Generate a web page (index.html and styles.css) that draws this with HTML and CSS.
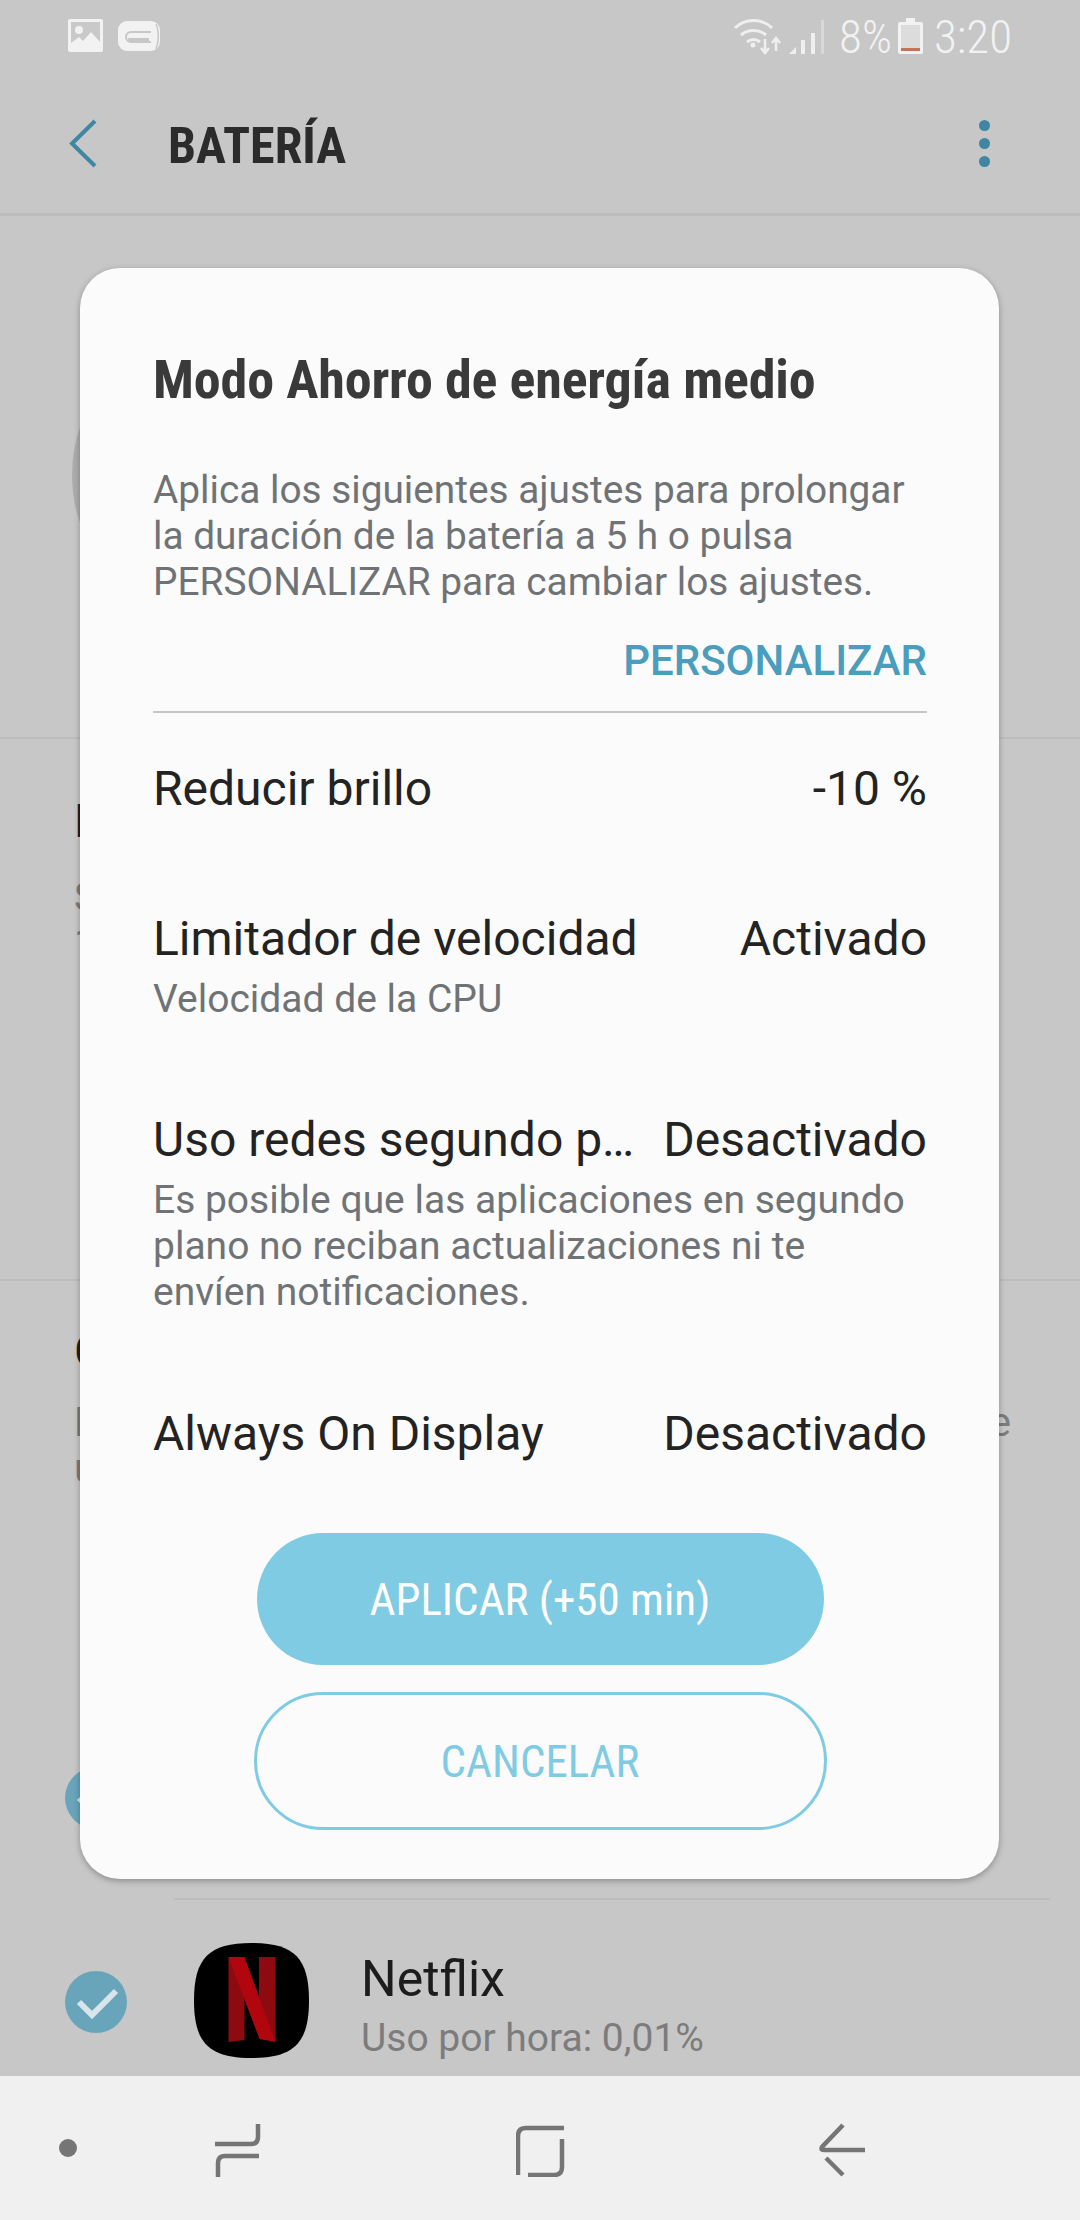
FILE: index.html
```html
<!DOCTYPE html>
<html lang="es">
<head>
<meta charset="utf-8">
<title>Batería</title>
<link rel="stylesheet" href="styles.css">
</head>
<body>
<div class="phone">
  <header class="status">
    <svg class="st-image" width="35" height="33" viewBox="0 0 35 33"><rect width="35" height="33" rx="2" fill="#f2f2f2"/><rect x="3" y="3" width="29" height="27" fill="#c9c9c9"/><circle cx="11" cy="11" r="4" fill="#f2f2f2"/><path d="M3 24l8-6 4 4 8-9 9 10v10H3z" fill="#f2f2f2"/></svg>
    <svg class="st-game" width="42" height="30" viewBox="0 0 42 30"><rect width="42" height="30" rx="9" fill="#f2f2f2"/><path d="M33 11H13a5 5 0 0 0 0 10h20" fill="none" stroke="#c7c7c7" stroke-width="2"/><path d="M10 17h21v4H10z" fill="#c7c7c7"/><path d="M38 3c3 6 3 18 0 25" fill="none" stroke="#c7c7c7" stroke-width="1.500"/></svg>
    <span class="st-fill"></span>
    <svg class="st-wifi" width="50" height="38" viewBox="0 0 50 38" fill="none" stroke="#efefef" stroke-width="3"><path d="M2 10c10-10 27-10 37 0"/><path d="M8 17c7-6 18-6 25 0"/><path d="M14 24c4-3 9-3 13 0"/><circle cx="20" cy="27" r="2.500" fill="#efefef" stroke="none"/><path d="M32 21v12M28 30l4 5 4-5M43 33V22M39 25l4-5 4 5" stroke-width="2.500"/></svg>
    <svg class="st-signal" width="36" height="36" viewBox="0 0 36 36"><path d="M1 35l7-7v7z" fill="#efefef"/><rect x="13" y="21" width="4" height="14" fill="#efefef"/><rect x="23" y="14" width="4" height="21" fill="#efefef"/><rect x="33" y="1" width="3" height="34" fill="#d9d9d9"/></svg>
    <span class="st-text st-pct">8%</span>
    <svg class="st-batt" width="25" height="36" viewBox="0 0 25 36"><path d="M8 0h9v4h6a2 2 0 0 1 2 2v28a2 2 0 0 1-2 2H2a2 2 0 0 1-2-2V6a2 2 0 0 1 2-2h6z" fill="#f2f2f2"/><rect x="3" y="7" width="19" height="26" fill="#dcdcdc"/><rect x="3" y="30" width="19" height="3" fill="#c8725a"/></svg>
    <span class="st-text st-time">3:20</span>
  </header>

  <div class="appbar">
    <svg class="ab-back" width="29" height="49" viewBox="0 0 29 49" fill="none" stroke="#3f86a3" stroke-width="4"><path d="M26 2L3 24.500 26 47"/></svg>
    <h1 class="ab-title">BATERÍA</h1>
    <span class="ab-more"><i></i><i></i><i></i></span>
  </div>

  <main class="content">
    <section class="sec sec-gauge"><div class="gauge"></div></section>
    <section class="sec sec-mode">
      <p class="bg-title">Modo de energía</p>
      <p class="bg-sub">Sin ahorro</p>
      <p class="bg-sub">1 h</p>
    </section>
    <section class="sec sec-usage">
      <p class="bg-title">Consumo</p>
      <p class="bg-sub bg-split"><span>Pueden</span><span>e</span></p>
      <p class="bg-sub">uso</p>
    </section>
    <div class="app app-first">
      <span class="check"><svg width="62" height="62" viewBox="0 0 62 62" fill="none" stroke="#d8e5ea" stroke-width="6"><path d="M14 31l13 13 24-24"/></svg></span>
    </div>
    <div class="app-sep"></div>
    <div class="app app-netflix">
      <span class="check"><svg width="62" height="62" viewBox="0 0 62 62" fill="none" stroke="#d8e5ea" stroke-width="6"><path d="M14 31l13 13 24-24"/></svg></span>
      <svg class="netflix" width="115" height="115" viewBox="0 0 115 115"><path d="M57.500 0C100 0 115 15 115 57.500S100 115 57.500 115 0 100 0 57.500 15 0 57.500 0z" fill="#000"/><path d="M34.500 14h16v83l-16 2z" fill="#8c0a10"/><path d="M65 14h16.500v85L65 90z" fill="#8c0a10"/><path d="M34.500 14h16l31 85-16-3z" fill="#b2060f"/></svg>
      <div class="app-info">
        <div class="app-name">Netflix</div>
        <div class="app-use">Uso por hora: 0,01%</div>
      </div>
    </div>
  </main>

  <nav class="nav">
    <span class="nav-dot"></span>
    <svg class="nav-recent" width="50" height="56" viewBox="0 0 50 56" fill="none" stroke="#757575" stroke-width="4.500"><path d="M1 21h36q7 0 7-7V1"/><path d="M45 33H11q-7 0-7 7v14"/></svg>
    <svg class="nav-home" width="50" height="52" viewBox="0 0 50 52" fill="none" stroke="#757575" stroke-width="4.500"><path d="M2 50V11q0-8 8-8h38"/><path d="M46 14v28q0 8-8 8H12"/></svg>
    <svg class="nav-backkey" width="50" height="56" viewBox="0 0 50 56" fill="none" stroke="#757575" stroke-width="4.500"><path d="M27 2L6 24q-2 3 2 3h41"/><path d="M10 35l17 17"/></svg>
  </nav>

  <div class="dialog">
    <h2 class="dlg-title">Modo Ahorro de energía medio</h2>
    <p class="dlg-text">Aplica los siguientes ajustes para prolongar la duración de la batería a 5 h o pulsa PERSONALIZAR para cambiar los ajustes.</p>
    <div class="dlg-link"><span>PERSONALIZAR</span></div>
    <div class="dlg-rule"></div>
    <div class="opt opt-brillo">
      <div class="opt-line"><span>Reducir brillo</span><span>-10 %</span></div>
    </div>
    <div class="opt opt-cpu">
      <div class="opt-line"><span>Limitador de velocidad</span><span>Activado</span></div>
      <p class="opt-sub">Velocidad de la CPU</p>
    </div>
    <div class="opt opt-net">
      <div class="opt-line"><span>Uso redes segundo p…</span><span>Desactivado</span></div>
      <p class="opt-sub">Es posible que las aplicaciones en segundo plano no reciban actualizaciones ni te<br>envíen notificaciones.</p>
    </div>
    <div class="opt opt-aod">
      <div class="opt-line"><span>Always On Display</span><span>Desactivado</span></div>
    </div>
    <button class="btn btn-apply">APLICAR (+50 min)</button>
    <button class="btn btn-cancel">CANCELAR</button>
  </div>
</div>
</body>
</html>
```

FILE: styles.css
```css
* { box-sizing: border-box; }
html, body { margin: 0; padding: 0; }
body { font-family: Roboto, "Liberation Sans", sans-serif; background: #c7c7c7; }
h1, h2, p { margin: 0; font-weight: 400; }

.phone {
  position: relative;
  width: 1080px;
  height: 2220px;
  overflow: hidden;
  display: flex;
  flex-direction: column;
  background: #c7c7c7;
}

/* status bar */
.status {
  height: 72px;
  display: flex;
  align-items: flex-start;
  padding: 18px 68px 0 68px;
  flex: none;
}
.st-image { margin-top: 1px; }
.st-game { margin: 3px 0 0 15px; }
.st-fill { flex: 1; }
.st-signal { margin-left: 5px; margin-top: 1px; }
.st-text {
  font-size: 47px;
  line-height: 38px;
  font-weight: 300;
  font-stretch: 75%;
  color: #f2f2f2;
}
.st-pct { margin-left: 15px; }
.st-batt { margin-left: 6px; }
.st-time { margin-left: 11px; }

/* app bar */
.appbar {
  height: 144px;
  flex: none;
  display: flex;
  align-items: center;
  padding-left: 69px;
  border-bottom: 3px solid #bcbcbc;
  position: relative;
}
.ab-back { flex: none; margin-top: 2px; }
.ab-title {
  margin: 6px 0 0 70px;
  font-size: 50px;
  line-height: 60px;
  font-weight: 700;
  font-stretch: 75%;
  color: #2b2b2b;
  flex: 1;
}
.ab-more {
  display: flex;
  flex-direction: column;
  gap: 7px;
  margin-right: 90px;
  margin-top: 2px;
}
.ab-more i {
  display: block;
  width: 11px;
  height: 11px;
  border-radius: 50%;
  background: #3f86a3;
}

/* dimmed page */
.content { flex: 1; min-height: 0; overflow: hidden; display: flex; flex-direction: column; }
.sec { border-bottom: 2px solid #bcbcbc; flex: none; }
.sec-gauge { height: 523px; padding: 111px 0 0 72px; }
.gauge {
  width: 296px;
  height: 296px;
  border-radius: 50%;
  border: 22px solid #adadad;
}
.sec-mode { height: 542px; padding: 54px 74px 0; }
.sec-usage { height: 0; border: 0; padding: 42px 74px 0; }
.bg-title { font-size: 46px; line-height: 56px; color: #1e1e1e; }
.bg-sub { font-size: 40px; line-height: 46px; color: #7c7c7c; }
.sec-mode .bg-title { margin-bottom: 26px; }
.sec-usage .bg-title { margin-bottom: 21px; }
.bg-split { display: flex; justify-content: space-between; margin-right: -5px; }

.app { position: relative; display: flex; align-items: center; flex: none; padding-left: 65px; }
.app-first { margin-top: 444px; height: 62px; }
.app-sep { margin: 69px 30px 0 174px; height: 2px; background: #bcbcbc; flex: none; }
.app-netflix { margin-top: 43px; height: 118px; }
.check {
  width: 62px;
  height: 62px;
  border-radius: 50%;
  background: #68a5bb;
  flex: none;
}
.check svg { display: block; }
.netflix { margin-left: 67px; flex: none; align-self: flex-start; }
.app-info { margin-left: 52px; padding-top: 7px; align-self: flex-start; }
.app-name { font-size: 50px; line-height: 58px; color: #1c1c1c; }
.app-use { margin-top: 6px; font-size: 39px; line-height: 48px; color: #7c7c7c; white-space: nowrap; }

/* nav */
.nav {
  height: 144px;
  flex: none;
  background: #f0f0f0;
  display: flex;
  align-items: center;
  padding: 0 0 0 59px;
}
.nav-dot { width: 18px; height: 18px; border-radius: 50%; background: #757575; flex: none; }
.nav-recent { margin-left: 137px; margin-top: 6px; }
.nav-home { margin-left: 252px; margin-top: 6px; }
.nav-backkey { margin-left: 250px; margin-top: 6px; }

/* dialog */
.dialog {
  position: absolute;
  left: 80px;
  top: 268px;
  width: 919px;
  height: 1611px;
  background: #fbfbfb;
  border-radius: 40px;
  box-shadow: 0 2px 6px rgba(0, 0, 0, .3);
  padding: 0 72px 0 73px;
  display: flex;
  flex-direction: column;
}
.dlg-title {
  margin: 80px 0 0;
  font-size: 54px;
  line-height: 64px;
  font-weight: 700;
  font-stretch: 75%;
  letter-spacing: -.15px;
  color: #3a3a3a;
  white-space: nowrap;
}
.dlg-text {
  margin-top: 55px;
  font-size: 38.800px;
  line-height: 46px;
  color: #6f7376;
}
.dlg-link {
  margin-top: 30px;
  text-align: right;
  font-size: 42px;
  line-height: 52px;
  font-weight: 500;
  color: #4a9dbc;
}
.dlg-rule { margin-top: 24px; height: 2px; background: #c4c4c4; flex: none; }
.opt-line {
  display: flex;
  justify-content: space-between;
  font-size: 48px;
  line-height: 54px;
  color: #232323;
  white-space: nowrap;
}
.opt-sub { font-size: 39px; line-height: 46px; color: #6f7376; }
.opt-brillo { margin-top: 49px; }
.opt-cpu { margin-top: 96px; }
.opt-cpu .opt-sub { margin-top: 10px; }
.opt-net { margin-top: 91px; }
.opt-net .opt-sub { margin-top: 10px; }
.opt-aod { margin-top: 92px; }
.btn {
  display: block;
  font: inherit;
  font-stretch: 75%;
  font-size: 45px;
  padding: 0;
  border-radius: 70px;
  align-self: center;
  cursor: pointer;
}
.btn-apply {
  margin-top: 72px;
  width: 567px;
  height: 132px;
  background: #7fcbe3;
  border: 0;
  color: #fff;
}
.btn-cancel {
  margin-top: 27px;
  width: 573px;
  height: 138px;
  background: transparent;
  border: 3px solid #7fcbe3;
  color: #7fcbe3;
}
```
